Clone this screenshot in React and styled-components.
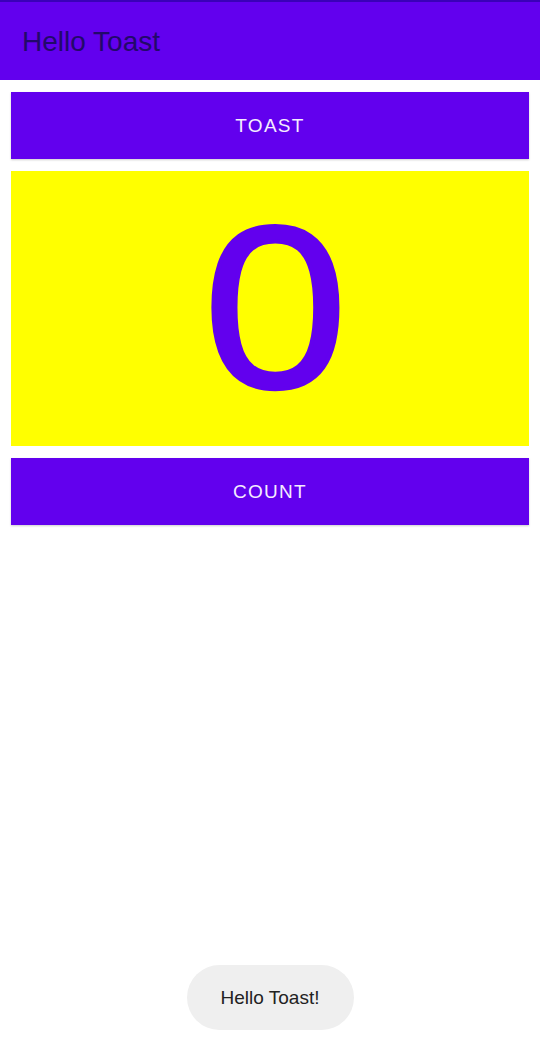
import React, { useState } from "react";
import styled, { createGlobalStyle } from "styled-components";

const GlobalStyle = createGlobalStyle`
  html, body {
    margin: 0;
    padding: 0;
    background: #ffffff;
  }
  body {
    font-family: "Liberation Sans", Arial, sans-serif;
  }
`;

function App() {
  const [count, setCount] = useState(0);
  const [showToast, setShowToast] = useState(true);

  return (
    <Screen>
      <GlobalStyle />
      <StatusLine />
      <AppBar>
        <Title>Hello Toast</Title>
      </AppBar>
      <Content>
        <ActionButton onClick={() => setShowToast(true)}>Toast</ActionButton>
        <CountPanel>
          <CountText>{count}</CountText>
        </CountPanel>
        <ActionButton onClick={() => setCount(count + 1)}>Count</ActionButton>
      </Content>
      {showToast && (
        <ToastWrapper>
          <Toast>Hello Toast!</Toast>
        </ToastWrapper>
      )}
    </Screen>
  );
}

export default App;

const Screen = styled.div`
  display: flex;
  flex-direction: column;
  width: 540px;
  min-height: 1057px;
  background: #ffffff;
`;

const StatusLine = styled.div`
  height: 2px;
  background: #3a00b8;
`;

const AppBar = styled.header`
  display: flex;
  align-items: center;
  height: 78px;
  padding: 0 22px;
  background: #6200ee;
  box-sizing: border-box;
`;

const Title = styled.h1`
  margin: 2px 0 0;
  font-family: "Liberation Sans", Arial, sans-serif;
  font-weight: 400;
  font-size: 28px;
  color: #22096a;
`;

const Content = styled.main`
  display: flex;
  flex-direction: column;
  gap: 12px;
  padding: 12px 11px 0;
`;

const ActionButton = styled.button`
  display: flex;
  align-items: center;
  justify-content: center;
  height: 67px;
  border: none;
  border-radius: 0;
  background: #6200ee;
  color: #f4ecff;
  font-family: "Liberation Sans", Arial, sans-serif;
  font-size: 19px;
  letter-spacing: 1.3px;
  text-transform: uppercase;
  box-shadow: 0 1px 2px rgba(0, 0, 0, 0.2);
  cursor: pointer;
`;

const CountPanel = styled.div`
  display: flex;
  align-items: center;
  justify-content: center;
  height: 275px;
  background: #ffff00;
`;

const CountText = styled.span`
  display: inline-block;
  font-family: "Open Sans", Roboto, sans-serif;
  font-weight: 400;
  font-size: 222px;
  line-height: 275px;
  height: 275px;
  color: #6200ee;
  -webkit-text-stroke: 4px #6200ee;
  transform: translate(5px, -7px) scaleX(1.18);
`;

const ToastWrapper = styled.div`
  display: flex;
  justify-content: center;
  margin-top: auto;
  padding-bottom: 27px;
`;

const Toast = styled.div`
  display: flex;
  align-items: center;
  justify-content: center;
  width: 167px;
  height: 65px;
  border-radius: 33px;
  background: #efefef;
  color: #222222;
  font-family: "Liberation Sans", Arial, sans-serif;
  font-size: 19px;
  box-sizing: border-box;
`;
